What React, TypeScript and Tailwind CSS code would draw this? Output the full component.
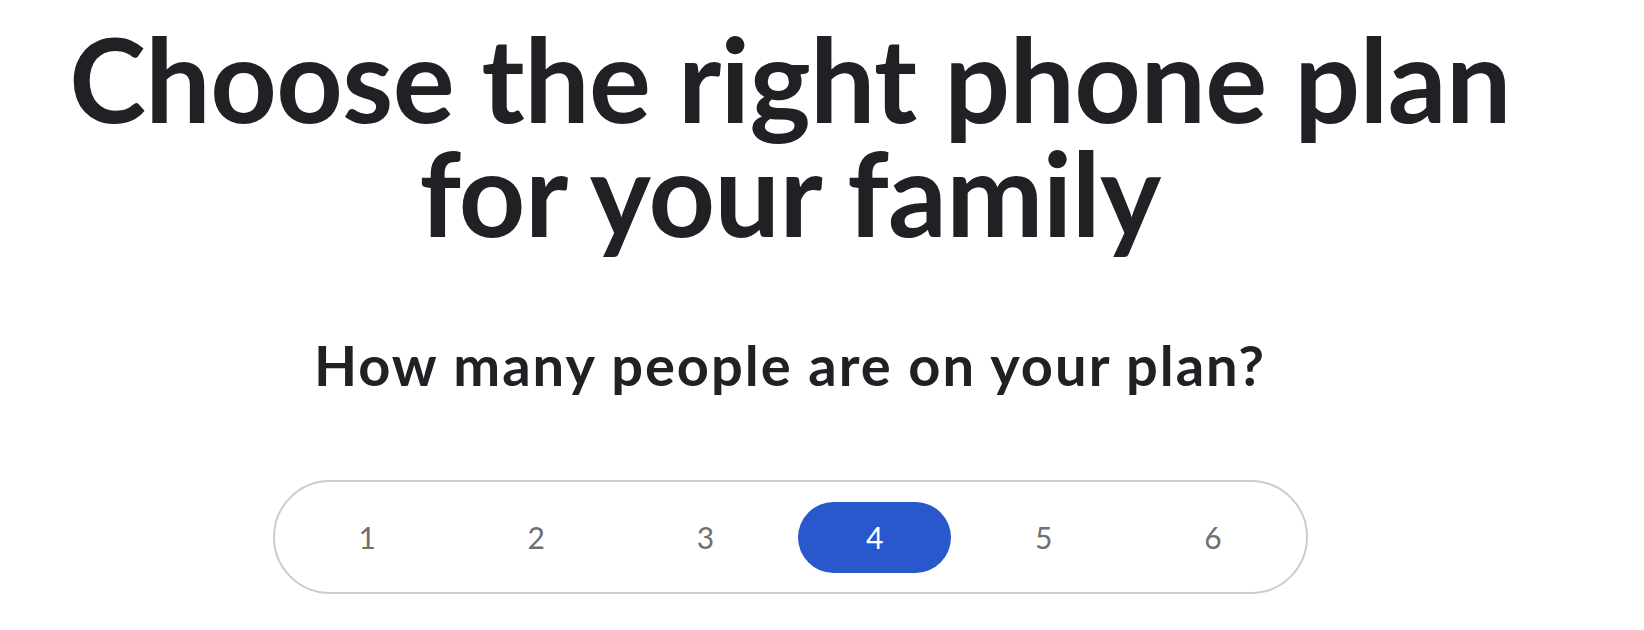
import React, { useState } from 'react';

const sizes = [1, 2, 3, 4, 5, 6];

export default function App() {
  const [people, setPeople] = useState(4);

  return (
    <div className="min-h-screen bg-white pr-[64px] font-['Lato',sans-serif] text-[#202124]">
      <div className="flex flex-col items-center">
        <h1 className="mt-[22px] text-center text-[116px] font-bold leading-[114px] tracking-[-0.6px]">
          Choose the right phone plan
          <br />
          for your family
        </h1>

        <h2 className="mt-[83px] text-[56px] font-bold leading-[64px] tracking-[2px]">
          How many people are on your plan?
        </h2>

        {/* people picker */}
        <div className="mt-[83px] grid h-[114px] w-[1035px] grid-cols-6 items-center rounded-full border-2 border-[#cccccc] px-[8px]">
          {sizes.map(n => (
            <button
              key={n}
              type="button"
              onClick={() => setPeople(n)}
              className={
                n === people
                  ? 'mx-[8px] h-[71px] rounded-full bg-[#2858cc] text-[30px] text-white'
                  : 'mx-[8px] h-[71px] rounded-full text-[30px] text-[#707070]'
              }
            >
              {n}
            </button>
          ))}
        </div>
      </div>
    </div>
  );
}
